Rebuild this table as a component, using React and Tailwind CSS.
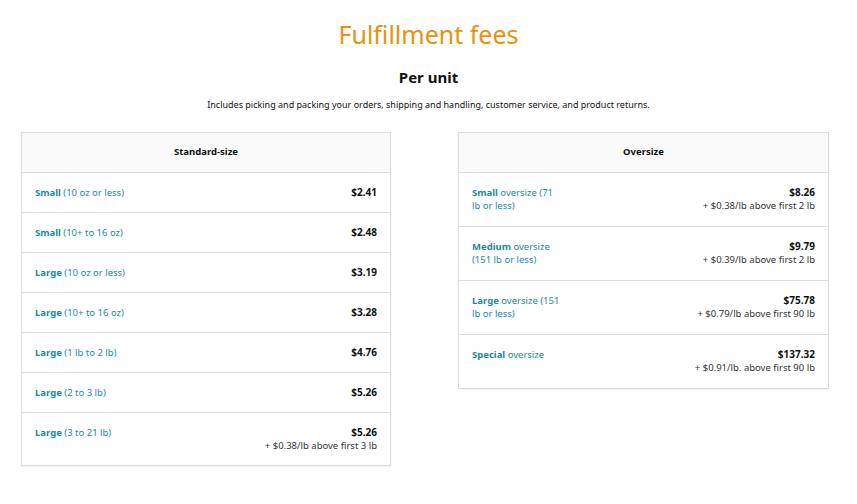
import React from "react";

const left = [
  ["Small", [" (10 oz or less)"], "$2.41"],
  ["Small", [" (10+ to 16 oz)"], "$2.48"],
  ["Large", [" (10 oz or less)"], "$3.19"],
  ["Large", [" (10+ to 16 oz)"], "$3.28"],
  ["Large", [" (1 lb to 2 lb)"], "$4.76"],
  ["Large", [" (2 to 3 lb)"], "$5.26"],
  ["Large", [" (3 to 21 lb)"], "$5.26", "+ $0.38/lb above first 3 lb"],
];

const right = [
  ["Small", [" oversize (71", "lb or less)"], "$8.26", "+ $0.38/lb above first 2 lb"],
  ["Medium", [" oversize", "(151 lb or less)"], "$9.79", "+ $0.39/lb above first 2 lb"],
  ["Large", [" oversize (151", "lb or less)"], "$75.78", "+ $0.79/lb above first 90 lb"],
  ["Special", [" oversize"], "$137.32", "+ $0.91/lb. above first 90 lb"],
];

function Table({ title, rows, narrow }) {
  return (
    <div className="border border-[#dddddd] shadow-[0_1px_2px_rgba(0,0,0,0.06)]">
      <div className="h-[40px] flex items-center justify-center bg-[#fafafa] border-b border-[#dddddd] text-[9.5px] font-bold text-[#0f1111]">
        {title}
      </div>
      {rows.map((r, i) => (
        <div
          key={i}
          className={`flex justify-between pl-[13px] pr-[13px] pt-[13px] ${narrow ? "pb-[14px]" : "pb-[13px]"} ${i < rows.length - 1 ? "border-b border-[#dddddd]" : ""} text-[9.5px] leading-[13px]`}
        >
          <div className="text-[#1b8aa0]">
            <div>
              <span className="font-bold">{r[0]}</span>
              <span>{r[1][0]}</span>
            </div>
            {r[1][1] && <div>{r[1][1]}</div>}
          </div>
          <div className="text-right">
            <div className="font-bold text-[10px] text-[#0f1111]">{r[2]}</div>
            {r[3] && <div className="text-[#333] text-[9.5px]">{r[3]}</div>}
          </div>
        </div>
      ))}
    </div>
  );
}

export default function App() {
  return (
    <div
      className="w-[857px] h-[504px] bg-white overflow-hidden"
      style={{ fontFamily: '"Noto Sans", "Open Sans", sans-serif' }}
    >
      <div className="pt-[17px] text-center text-[25px] leading-[34px] text-[#e8920e]">
        Fulfillment fees
      </div>
      <div className="mt-[16px] text-center text-[15px] leading-[20px] font-bold text-[#0f1111]">
        Per unit
      </div>
      <div className="mt-[12px] text-center text-[9px] leading-[12px] text-[#0f1111]">
        Includes picking and packing your orders, shipping and handling, customer service, and product returns.
      </div>
      <div className="mt-[21px] flex items-start pl-[21px] gap-[67px]">
        <div className="w-[370px]">
          <Table title="Standard-size" rows={left} />
        </div>
        <div className="w-[371px]">
          <Table title="Oversize" rows={right} narrow />
        </div>
      </div>
    </div>
  );
}
